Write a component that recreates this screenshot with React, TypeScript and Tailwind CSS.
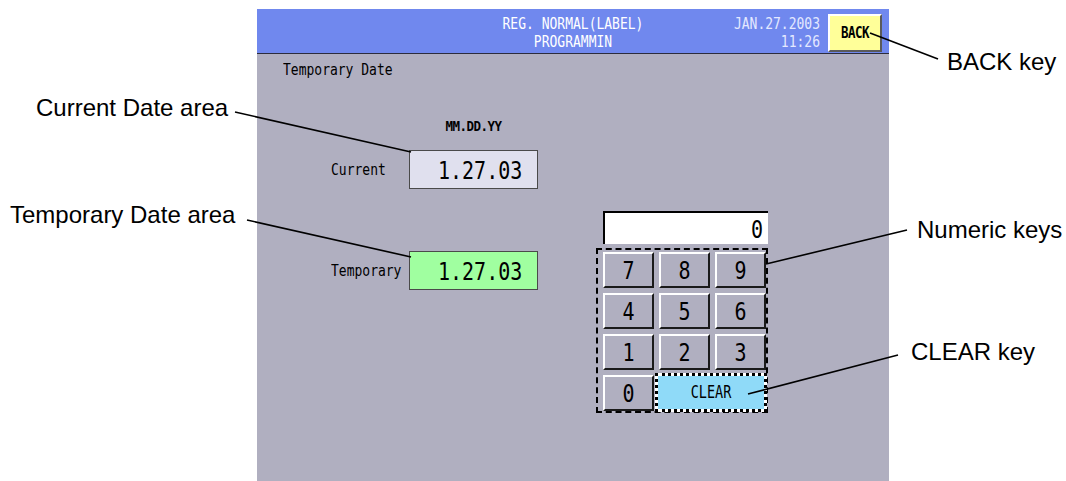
import React from 'react'

const mono = "font-['DejaVu_Sans_Mono',monospace]"

function Tall({ children, className = '' }: { children: React.ReactNode; className?: string }) {
  return <span className={`inline-block scale-y-125 ${className}`}>{children}</span>
}

function Key({ label }: { label: string }) {
  return (
    <div className="flex items-center justify-center bg-[#b0afc0] border-2 border-t-white border-l-white border-b-[#1a1a1a] border-r-[#1a1a1a] text-[20px] leading-none text-black">
      <Tall>{label}</Tall>
    </div>
  )
}

function DateRow({ label, fill }: { label: string; fill: string }) {
  return (
    <div className="flex items-center h-[39px]">
      <div className="w-[78px] text-[13px] leading-[16px] text-black">
        <Tall>{label}</Tall>
      </div>
      <div className={`w-[129px] h-[39px] flex items-center pl-[28px] border border-[#4a4a4a] ${fill} text-[20px] leading-none text-black`}>
        <Tall>1.27.03</Tall>
      </div>
    </div>
  )
}

export default function App() {
  return (
    <div className="relative w-[1066px] h-[481px] bg-white overflow-hidden flex font-['Liberation_Sans',Arial,sans-serif]">
      {/* callouts, left */}
      <div className="w-[257px] flex flex-col text-[24px] leading-[24px] text-black">
        <div className="mt-[96px] ml-[36px] whitespace-nowrap">Current Date area</div>
        <div className="mt-[83px] ml-[10px] whitespace-nowrap">Temporary Date area</div>
      </div>

      {/* the terminal screen */}
      <div className={`w-[632px] mt-[9px] flex flex-col ${mono}`}>
        <div className="h-[45px] grid grid-cols-[1fr_auto_1fr] bg-[#7088ee] border-b border-[#2c2c3c] text-[13px] leading-[18px]">
          <div />
          <div className="pt-[6px] text-center text-white">
            <div><Tall>REG. NORMAL(LABEL)</Tall></div>
            <div><Tall>PROGRAMMIN</Tall></div>
          </div>
          <div className="flex justify-end items-start pr-[7px]">
            <div className="pt-[6px] text-right text-[#e4e8ff]">
              <div><Tall>JAN.27.2003</Tall></div>
              <div><Tall>11:26</Tall></div>
            </div>
            <div className="ml-[8px] mt-[5px] w-[54px] h-[38px] flex items-center justify-center bg-[#ffff99] border-2 border-t-white border-l-white border-b-[#5a5a5a] border-r-[#5a5a5a] text-[12.5px] font-bold text-black tracking-[-0.5px]">
              <Tall>BACK</Tall>
            </div>
          </div>
        </div>

        <div className="flex-1 bg-[#b0afc0]">
          <div className="mt-[8px] pl-[26px] h-[16px] text-[13px] leading-[16px] text-black">
            <Tall>Temporary Date</Tall>
          </div>

          <div className="flex items-start">
            <div className="ml-[74px] mt-[42px] flex flex-col">
              <div className="flex h-[14px]">
                <div className="w-[78px]" />
                <div className="w-[129px] text-center text-[12.5px] leading-[14px] font-bold tracking-[-0.5px] text-black">
                  <span className="inline-block scale-y-110">MM.DD.YY</span>
                </div>
              </div>
              <div className="mt-[16px]">
                <DateRow label="Current" fill="bg-[#e0e0ee]" />
              </div>
              <div className="mt-[62px]">
                <DateRow label="Temporary" fill="bg-[#a0ffa0]" />
              </div>
            </div>

            <div className="ml-[58px] mt-[133px] w-[172px]">
              <div className="ml-[7px] w-[165px] h-[33px] flex items-center justify-end pr-[5px] bg-white border-t-2 border-l-2 border-black text-[20px] leading-none text-black">
                <Tall>0</Tall>
              </div>
              <div className="mt-[4px] w-[172px] h-[165px] border-2 border-dashed border-black pl-[5px] pt-[2px]">
                <div className="grid grid-cols-[51px_51px_51px] auto-rows-[36px] gap-[5px]">
                  {['7', '8', '9', '4', '5', '6', '1', '2', '3', '0'].map((k) => (
                    <Key key={k} label={k} />
                  ))}
                  <div className="col-span-2 -ml-[4px] -mt-[2px] -mr-[1px] h-[39px] bg-white">
                    <div className="h-full flex items-center justify-center bg-[#8fdaf8] bg-clip-padding border-[3px] border-dotted border-black text-[13.5px] leading-none text-black">
                      <Tall>CLEAR</Tall>
                    </div>
                  </div>
                </div>
              </div>
            </div>
          </div>
        </div>
      </div>

      {/* callouts, right */}
      <div className="flex-1 flex flex-col text-[24px] leading-[24px] text-black">
        <div className="mt-[50px] ml-[58px] whitespace-nowrap">BACK key</div>
        <div className="mt-[144px] ml-[28px] whitespace-nowrap">Numeric keys</div>
        <div className="mt-[98px] ml-[22px] whitespace-nowrap">CLEAR key</div>
      </div>

      <svg className="absolute inset-0 pointer-events-none" width="1066" height="481" viewBox="0 0 1066 481">
        <g stroke="#000" strokeWidth="1.6" fill="none">
          <line x1="235" y1="112" x2="411" y2="152" />
          <line x1="247" y1="220" x2="411" y2="257" />
          <line x1="870" y1="33" x2="938" y2="59" />
          <line x1="907" y1="230" x2="766" y2="264" />
          <line x1="898" y1="355" x2="748" y2="394" />
        </g>
      </svg>
    </div>
  )
}
